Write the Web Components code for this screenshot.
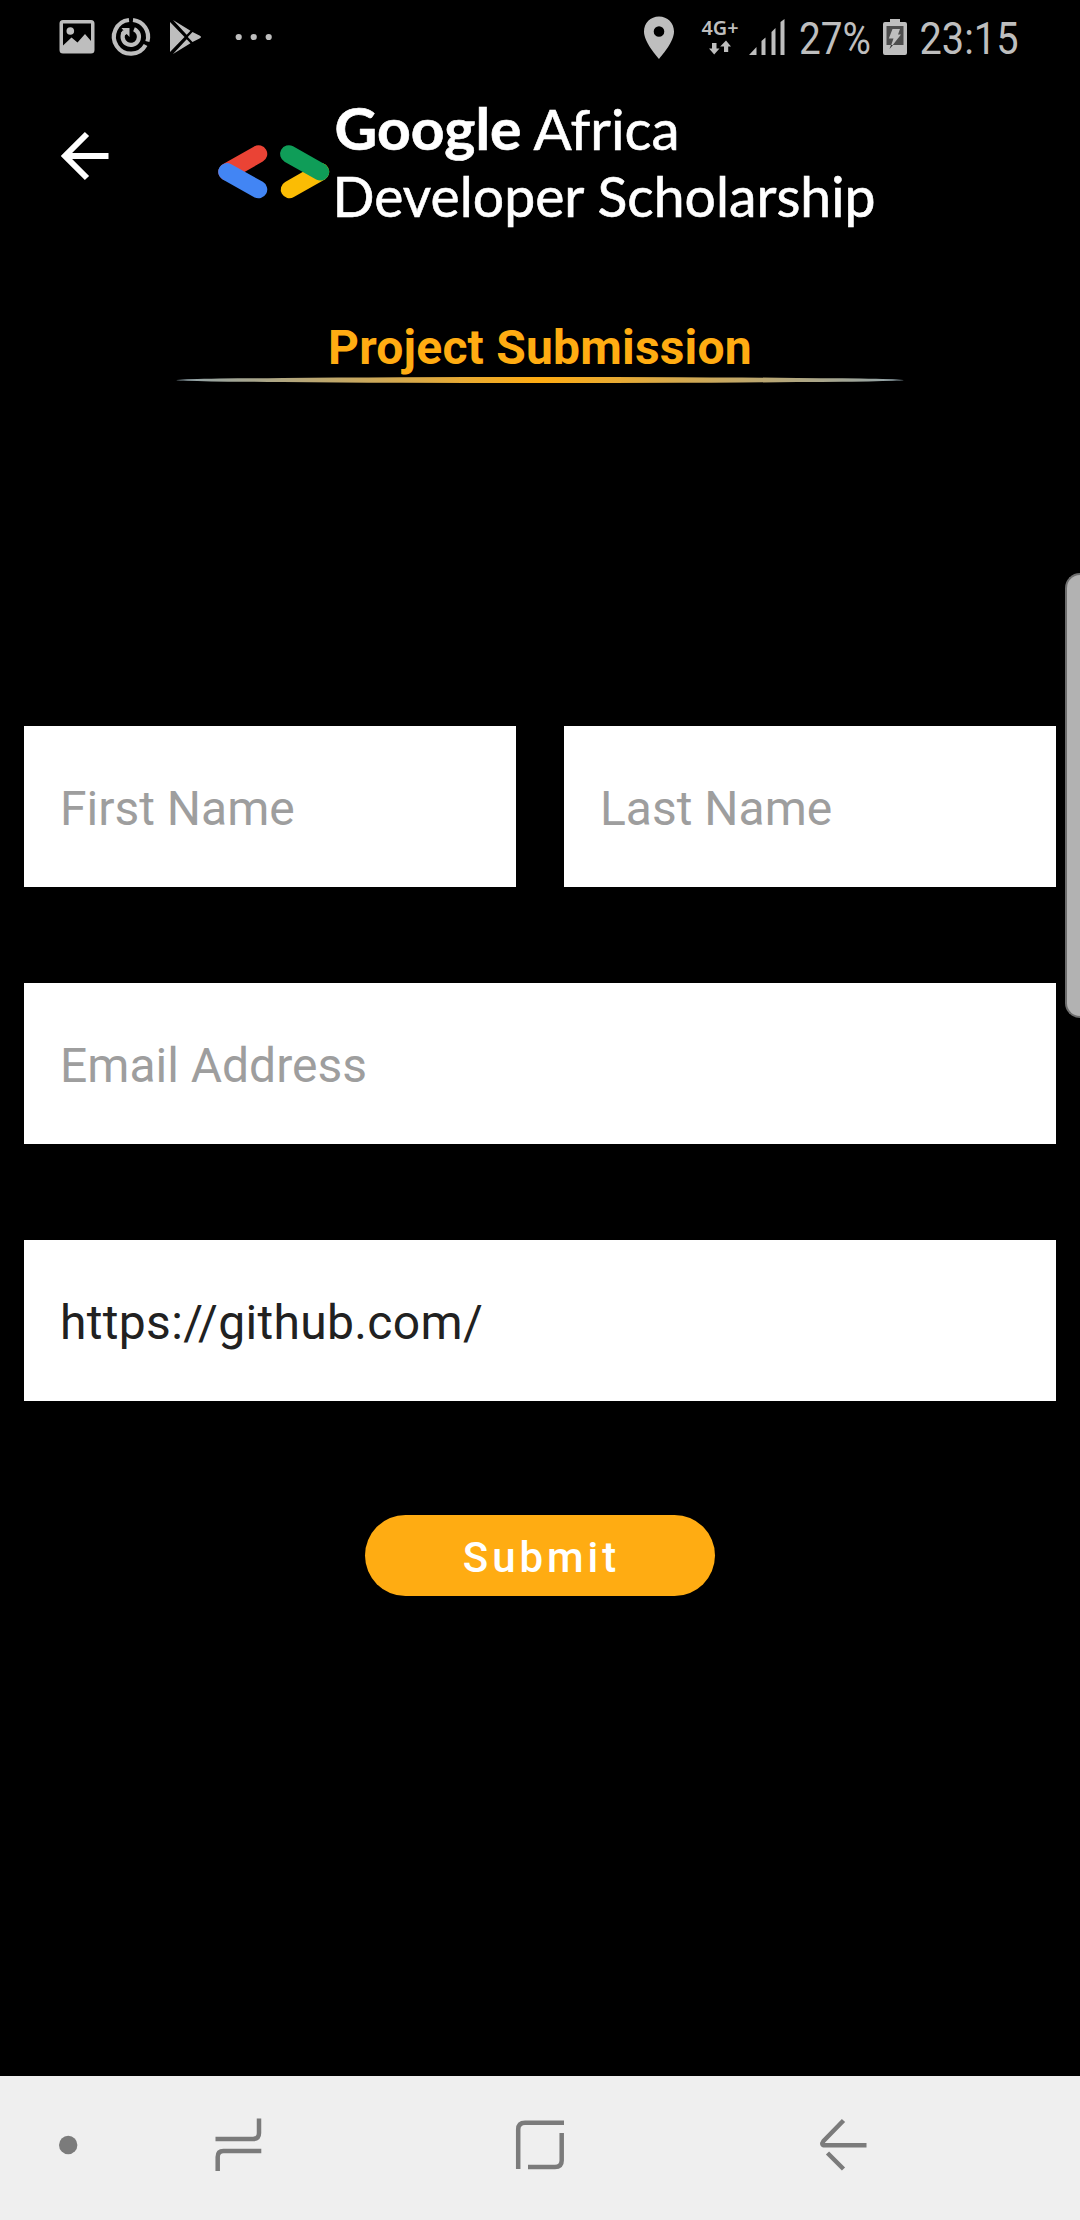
<!DOCTYPE html>
<html lang="en">
<head>
<meta charset="utf-8">
<title>Project Submission</title>
<style>
body{margin:0;background:#000;font-family:Roboto,"Liberation Sans",sans-serif}
</style>
</head>
<body>
<submission-screen></submission-screen>
<script>
const define = (name, css, html) => {
  const tpl = document.createElement('template');
  tpl.innerHTML = `<style>:host{display:block;box-sizing:border-box}svg{display:block;flex:none;overflow:visible}${css}</style>${html}`;
  customElements.define(name, class extends HTMLElement {
    constructor() {
      super();
      this.attachShadow({mode: 'open'}).append(tpl.content.cloneNode(true));
    }
  });
};

define('status-bar', `
:host{display:flex;justify-content:space-between;height:80px;padding:0 62px 0 59px;color:#bebebe}
.group{display:flex;height:74px;align-items:center}
svg{fill:currentColor}
text{font-family:Roboto,sans-serif}
`, `
<div class="group">
  <svg width="36" height="34" viewBox="59 20 36 34"><path fill-rule="evenodd" d="M63 20H91Q94.500 20 94.500 23.500V50Q94.500 53.500 91 53.500H63Q59.500 53.500 59.500 50V23.500Q59.500 20 63 20ZM63 23.500V45.500L71.500 37.500L77.500 42.500L85 34L91 41V23.500Z"/><circle cx="70.300" cy="31" r="3.800"/></svg>
  <svg style="margin-left:17px" width="38" height="38" viewBox="112 18 38 38"><g fill="none" stroke="currentColor" stroke-width="4.200"><path d="M129 20A16.900 16.900 0 1 0 145.600 45"/><path d="M133 20A16.900 16.900 0 0 1 147.400 41.500"/><path d="M124.500 31.500A8.200 8.200 0 1 0 134 29.200"/></g><path d="M121.500 28H129.500V37L126.700 34L124 36L120.700 33L123.500 30.500Z"/></svg>
  <svg style="margin-left:20px" width="32" height="34" viewBox="170 20 32 34"><path d="M170 22L184.500 37L170 52ZM173 20L190.500 30.800L186.700 34.700ZM173 54L190.500 43.200L186.700 39.300ZM192.500 32L199.500 35.500Q202.500 37 199.500 38.500L192.500 42L187.800 37Z"/></svg>
  <svg style="margin-left:33px" width="38" height="8" viewBox="235 33 38 8"><circle cx="238.700" cy="37" r="3.100"/><circle cx="253.700" cy="37" r="3.100"/><circle cx="268.700" cy="37" r="3.100"/></svg>
</div>
<div class="group">
  <svg width="30" height="43" viewBox="644.500 15.500 30 43"><path fill-rule="evenodd" d="M659.500 16C668 16 674.500 22.500 674.500 31C674.500 41 663.500 53.500 659.500 58.500C655.500 53.500 644.500 41 644.500 31C644.500 22.500 651 16 659.500 16ZM659.500 25.700A5.300 5.300 0 1 0 659.500 36.300A5.300 5.300 0 1 0 659.500 25.700Z"/></svg>
  <svg style="margin-left:27px" width="38" height="34" viewBox="701.500 20 38 34"><text x="702" y="35" font-size="19.500" style="font-family:'Noto Sans';font-weight:600" textLength="37" lengthAdjust="spacingAndGlyphs">4G+</text><path d="M712.500 43H717V48.500H720L714.700 54.500L709.500 48.500H712.500ZM724.500 52V46.500H720.700L726.500 40.500L731.500 46.500H728.700V52Z"/></svg>
  <svg style="margin-left:10px" width="36" height="36" viewBox="749.500 18 36 36"><path d="M749.500 54L757 46V54ZM762 54V40L766 36.500V54ZM772 54V31L776 27V54ZM781 54V21L785 18V54Z"/></svg>
  <svg style="margin-left:15px" width="70" height="34" viewBox="800 20 70 34"><text x="799" y="54" font-size="45" textLength="72" lengthAdjust="spacingAndGlyphs">27%</text></svg>
  <svg style="margin-left:13px" width="24" height="36" viewBox="883 19 24 36"><path d="M890 19H900V22H905Q907 22 907 24V53Q907 55 905 55H885Q883 55 883 53V24Q883 22 885 22H890Z"/><path fill="#4d4d4d" d="M886.500 26H903.500V45H886.500Z"/><path d="M892.500 29H900L898 34.500H901L890 48.500L893.500 38.500H888.800Z"/><path fill="#303030" d="M891 45H893L889.500 49Z"/></svg>
  <svg style="margin-left:13px" width="98" height="34" viewBox="920 20 98 34"><text x="919.500" y="54" font-size="45" textLength="99" lengthAdjust="spacingAndGlyphs">23:15</text></svg>
</div>
`);

define('brand-logo', `
:host{display:flex;align-items:flex-start}
.mark{margin-top:38px}
text{font-family:Lato,sans-serif;fill:#fff}
`, `
<svg class="mark" width="112" height="54" viewBox="218 145 112 54">
  <g fill="none" stroke-width="17.500" stroke-linecap="round">
    <path stroke="#ea4335" d="M227 171.800L258.500 154"/><path stroke="#4285f4" d="M227 171.800L258.500 189.500"/>
    <path stroke="#fbbc04" d="M320.500 171.800L289.500 189.500"/><path stroke="#0f9d58" d="M320.500 171.800L288.800 154"/>
  </g>
</svg>
<svg style="margin-left:5px" width="538" height="122" viewBox="335 107 538 122">
  <text x="334.500" y="150" font-size="56.500" font-weight="700" textLength="187" lengthAdjust="spacingAndGlyphs" stroke="#fff" stroke-width=".6">Google</text>
  <text x="533.500" y="150" font-size="56.500" textLength="146" lengthAdjust="spacingAndGlyphs" stroke="#fff" stroke-width=".6">Africa</text>
  <text x="332.500" y="216.700" font-size="56" textLength="543" lengthAdjust="spacingAndGlyphs" stroke="#fff" stroke-width=".6">Developer Scholarship</text>
</svg>
`);

define('app-header', `
:host{display:flex;align-items:flex-start;height:239px;padding:27px 0 0 61px}
.back{margin-top:25px}
brand-logo{margin-left:109px}
`, `
<svg class="back" width="48" height="48" viewBox="60.500 132 48 48"><path fill="none" stroke="#fff" stroke-width="6" d="M108 156H65M86.500 134L64.500 156L86.500 178"/></svg>
<brand-logo></brand-logo>
`);

define('section-title', `
:host{display:flex;flex-direction:column;align-items:center;height:407px}
h1{margin:0;font-size:48px;line-height:57px;height:58px;font-weight:700;letter-spacing:.2px;color:#ffac12}
`, `
<h1><slot></slot></h1>
<svg width="728" height="6" viewBox="0 0 728 6"><defs><linearGradient id="g"><stop offset="0" stop-color="#90a4ae"/><stop offset=".5" stop-color="#ffac12"/><stop offset="1" stop-color="#90a4ae"/></linearGradient></defs><ellipse cx="364" cy="3" rx="363.500" ry="3" fill="url(#g)"/></svg>
`);

define('text-field', `
:host{display:flex;align-items:center;flex:1;height:161px;padding:5px 36px 0;background:#fff;color:#9e9e9e;font-size:48px;line-height:56px;white-space:nowrap}
:host([filled]){color:#212121;letter-spacing:.33px}
`, `<slot></slot>`);

define('submit-button', `
:host{display:flex;align-items:center;justify-content:center;width:350px;height:81px;border-radius:40.500px;background:#ffac12;color:#fff;font-size:42px;font-weight:500;letter-spacing:3.950px;padding:3px 0 0 3px}
`, `<slot></slot>`);

define('submission-form', `
:host{display:flex;flex-direction:column;gap:96px;padding:0 24px}
.row{display:flex;gap:48px}
submit-button{align-self:center;margin-top:18px}
`, `
<div class="row"><text-field>First Name</text-field><text-field>Last Name</text-field></div>
<div class="row"><text-field>Email Address</text-field></div>
<div class="row"><text-field filled>https://github.com/</text-field></div>
<submit-button>Submit</submit-button>
`);

define('edge-handle', `
:host{position:absolute;right:0;top:573px;width:15px;height:445px;border:2px solid #6d6d6d;border-right:0;border-radius:16px 0 0 16px;background:#b2b2b2}
`, ``);

define('nav-bar', `
:host{display:flex;align-items:flex-start;height:144px;padding:33px 0 0 59px;margin-top:auto;background:#efefef}
svg{fill:none;stroke:#7b7b7b;stroke-width:4.500}
`, `
<svg width="18" height="56" viewBox="59 2109 18 56"><circle cx="68.200" cy="2145" r="9.200" fill="#7b7b7b" stroke="none"/></svg>
<svg style="margin-left:138px" width="46" height="56" viewBox="215 2109 46 56"><path d="M215.500 2139H253Q259 2139 259 2133V2118.500M261.300 2151H223.500Q217.700 2151 217.700 2157V2171"/></svg>
<svg style="margin-left:255px" width="48" height="56" viewBox="516 2109 48 56"><path d="M518.200 2169V2129.500Q518.200 2122.700 525 2122.700H564M561.700 2133V2160.500Q561.700 2167 555 2167H528"/></svg>
<svg style="margin-left:256px" width="47" height="56" viewBox="820 2109 47 56"><path stroke-linejoin="round" d="M843.500 2120.500L823.500 2141Q820.500 2145.200 825 2145.200H866.500M827.500 2153L843.500 2169"/></svg>
`);

define('submission-screen', `
:host{position:relative;display:flex;flex-direction:column;width:1080px;height:2220px;overflow:hidden;background:#000}
`, `
<status-bar></status-bar>
<app-header></app-header>
<section-title>Project Submission</section-title>
<submission-form></submission-form>
<edge-handle></edge-handle>
<nav-bar></nav-bar>
`);
</script>
</body>
</html>
